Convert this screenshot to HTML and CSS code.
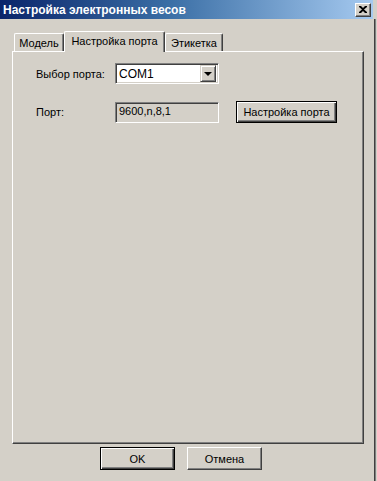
FILE: index.html
```html
<!DOCTYPE html>
<html>
<head>
<meta charset="utf-8">
<link rel="stylesheet" href="styles.css">
</head>
<body>
<div class="window">
  <div class="titlebar">
    <span class="title">Настройка электронных весов</span>
    <span class="close">
      <svg width="8" height="7" viewBox="0 0 8 7"><path d="M0 0h2l2 2 2-2h2v1L5 3.5 8 6v1H6L4 5 2 7H0V6l3-2.5L0 1z" fill="#000"/></svg>
    </span>
  </div>
  <div class="client">
    <div class="main">
      <div class="tabs">
        <div class="tab tab-model">Модель</div>
        <div class="tab tab-active">Настройка порта</div>
        <div class="tab tab-label">Этикетка</div>
      </div>
      <div class="panel">
        <div class="row row-first">
          <span class="label">Выбор порта:</span>
          <div class="combo">
            <span class="combo-text">COM1</span>
            <span class="combo-btn"><span class="arrow"></span></span>
          </div>
        </div>
        <div class="row row-second">
          <span class="label">Порт:</span>
          <div class="textbox">9600,n,8,1</div>
          <button class="btn btn-port">Настройка порта</button>
        </div>
      </div>
      <div class="actions">
        <button class="btn btn-default">OK</button>
        <button class="btn btn-cancel">Отмена</button>
      </div>
    </div>
    <div class="edge"></div>
  </div>
</div>
</body>
</html>
```
FILE: styles.css
```css
html, body {
  margin: 0;
  padding: 0;
  background: #D4D0C8;
}
body {
  font-family: "Liberation Sans", Arial, sans-serif;
  font-size: 11px;
  color: #000;
}
.window {
  width: 377px;
  height: 481px;
  background: #D4D0C8;
  display: flex;
  flex-direction: column;
  overflow: hidden;
}
.titlebar {
  width: 373px;
  height: 19px;
  background: linear-gradient(to right, #0A246A 0%, #3A6EA5 45%, #A6CAF0 100%);
  display: flex;
  align-items: center;
  justify-content: space-between;
  box-sizing: border-box;
  padding: 0 2px 0 3px;
}
.title {
  color: #fff;
  font-weight: bold;
  font-size: 12px;
  white-space: nowrap;
}
.close {
  width: 16px;
  height: 14px;
  box-sizing: border-box;
  background: #D4D0C8;
  border-top: 1px solid #fff;
  border-left: 1px solid #fff;
  border-right: 1px solid #404040;
  border-bottom: 1px solid #404040;
  box-shadow: inset -1px -1px #808080;
  display: flex;
  align-items: center;
  justify-content: center;
  padding-right: 1px;
}
.close svg { display: block; }
.client {
  flex: 1;
  display: flex;
}
.main {
  width: 374px;
  display: flex;
  flex-direction: column;
}
.edge {
  width: 2px;
  box-sizing: border-box;
  border-left: 1px solid #404040;
  border-right: 1px solid #808080;
}
.tabs {
  margin-top: 12px;
  margin-left: 14px;
  height: 20px;
  display: flex;
  align-items: flex-end;
  position: relative;
  z-index: 1;
}
.tab {
  box-sizing: border-box;
  height: 18px;
  border-top: 1px solid #fff;
  border-left: 1px solid #fff;
  border-right: 1px solid #404040;
  box-shadow: inset -1px 0 #808080;
  border-top-left-radius: 2px;
  border-top-right-radius: 2px;
  text-align: center;
  line-height: 17px;
  padding-top: 1px;
  background: #D4D0C8;
  white-space: nowrap;
}
.tab-model { width: 50px; }
.tab-label { width: 58px; }
.tab-active {
  width: 101px;
  height: 21px;
  margin-bottom: -1px;
}
.panel {
  margin-left: 12px;
  width: 352px;
  height: 393px;
  box-sizing: border-box;
  border-top: 1px solid #fff;
  border-left: 1px solid #fff;
  border-right: 1px solid #404040;
  border-bottom: 1px solid #404040;
  box-shadow: inset -1px -1px #808080;
  padding: 11px 0 0 23px;
  display: flex;
  flex-direction: column;
}
.row {
  display: flex;
  align-items: center;
}
.row-first { height: 21px; }
.row-second {
  height: 22px;
  margin-top: 17px;
}
.label {
  width: 79px;
  white-space: nowrap;
}
.combo, .textbox {
  width: 104px;
  height: 21px;
  box-sizing: border-box;
  border-top: 1px solid #808080;
  border-left: 1px solid #808080;
  border-right: 1px solid #fff;
  border-bottom: 1px solid #fff;
  box-shadow: inset 1px 1px #404040, inset -1px -1px #D4D0C8;
}
.combo {
  background: #fff;
  display: flex;
  align-items: center;
  padding: 2px 2px 2px 3px;
}
.combo-text {
  flex: 1;
  font-size: 12px;
}
.combo-btn {
  width: 16px;
  height: 17px;
  box-sizing: border-box;
  background: #D4D0C8;
  border-top: 1px solid #D4D0C8;
  border-left: 1px solid #D4D0C8;
  border-right: 1px solid #404040;
  border-bottom: 1px solid #404040;
  box-shadow: inset 1px 1px #fff, inset -1px -1px #808080;
  display: flex;
  align-items: center;
  justify-content: center;
}
.arrow {
  width: 0;
  height: 0;
  border-left: 4px solid transparent;
  border-right: 4px solid transparent;
  border-top: 4px solid #000;
  margin-left: -1px;
}
.textbox {
  background: #D4D0C8;
  line-height: 17px;
  padding-left: 3px;
}
.btn {
  font-family: "Liberation Sans", Arial, sans-serif;
  font-size: 11px;
  font-weight: normal;
  color: #000;
  background: #D4D0C8;
  box-sizing: border-box;
  border-top: 1px solid #fff;
  border-left: 1px solid #fff;
  border-right: 1px solid #404040;
  border-bottom: 1px solid #404040;
  box-shadow: inset -1px -1px #808080;
  padding: 0;
  margin: 0;
}
.btn-port {
  width: 101px;
  height: 22px;
  margin-left: 17px;
  border: 1px solid #000;
  box-shadow: inset 1px 1px #fff, inset -1px -1px #404040, inset -2px -2px #808080;
}
.actions {
  margin-top: 3px;
  padding-left: 100px;
  display: flex;
  gap: 12px;
}
.btn-default, .btn-cancel {
  width: 75px;
  height: 23px;
}
.btn-default {
  border: 1px solid #000;
  box-shadow: inset 1px 1px #fff, inset -1px -1px #404040, inset -2px -2px #808080;
}
```
